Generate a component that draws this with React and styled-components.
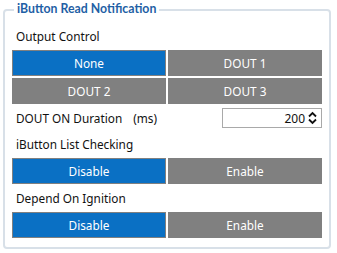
import React from 'react';
import styled, { createGlobalStyle } from 'styled-components';

const GlobalStyle = createGlobalStyle`
    html, body {
        margin: 0;
        padding: 0;
        background: #fff;
    }
    body {
        font-family: "Noto Sans", "Open Sans", sans-serif;
        font-size: 11.8px;
        color: #111;
    }
`;

const Page = styled.div`
    width: 337px;
    height: 253px;
    padding: 0 6px 0 3px;
    box-sizing: border-box;
`;

const Frame = styled.fieldset`
    margin: 0;
    padding: 5px 7px 9px 7px;
    border: 2px solid #d8e0e8;
    border-radius: 4px;
    min-width: 0;
`;

const Title = styled.legend`
    margin-left: 2px;
    padding: 0 3px 2px;
    font-family: Lato, "Noto Sans", sans-serif;
    font-size: 12.3px;
    line-height: 17px;
    font-weight: 700;
    color: #1f5fa5;
`;

const Stack = styled.div`
    display: flex;
    flex-direction: column;
    gap: 2px;
`;

const Section = styled.div`
    display: flex;
    flex-direction: column;
`;

const Label = styled.div`
    height: 26px;
    display: flex;
    align-items: center;
    padding-left: 4px;
    line-height: 1;
`;

const Grid = styled.div`
    display: grid;
    grid-template-columns: 1fr 1fr;
    gap: 2px;
`;

const Option = styled.div`
    height: 26px;
    box-sizing: border-box;
    border: 1px solid #808080;
    background: ${p => (p.$active ? '#0a70c4' : '#808080')};
    color: #fff;
    display: flex;
    align-items: center;
    justify-content: center;
`;

const Row = styled.div`
    height: 24px;
    display: flex;
    align-items: center;
    justify-content: space-between;
    padding-left: 4px;
`;

const Unit = styled.span`
    margin-left: 11px;
`;

const Spin = styled.div`
    width: 100px;
    height: 20px;
    box-sizing: border-box;
    border: 1px solid #a9a9a9;
    display: flex;
    align-items: center;
    justify-content: flex-end;
    padding-right: 4px;
    gap: 3px;
    font-size: 12px;
`;

const Arrows = () => (
    <svg width="9" height="14" viewBox="0 0 9 14">
        <path d="M1 5.5 L4.5 2 L8 5.5" fill="none" stroke="#111" strokeWidth="1.8" />
        <path d="M1 8.5 L4.5 12 L8 8.5" fill="none" stroke="#111" strokeWidth="1.8" />
    </svg>
);

const Toggle = ({ options, active }) => (
    <Grid>
        {options.map(o => (
            <Option key={o} $active={o === active}>{o}</Option>
        ))}
    </Grid>
);

const App = () => (
    <Page>
        <GlobalStyle />
        <Frame>
            <Title>iButton Read Notification</Title>
            <Stack>
                <Section>
                    <Label>Output Control</Label>
                    <Toggle options={['None', 'DOUT 1', 'DOUT 2', 'DOUT 3']} active="None" />
                </Section>
                <Row>
                    <span>DOUT ON Duration<Unit>(ms)</Unit></span>
                    <Spin>
                        <span>200</span>
                        <Arrows />
                    </Spin>
                </Row>
                <Section>
                    <Label>iButton List Checking</Label>
                    <Toggle options={['Disable', 'Enable']} active="Disable" />
                </Section>
                <Section>
                    <Label>Depend On Ignition</Label>
                    <Toggle options={['Disable', 'Enable']} active="Disable" />
                </Section>
            </Stack>
        </Frame>
    </Page>
);

export default App;
